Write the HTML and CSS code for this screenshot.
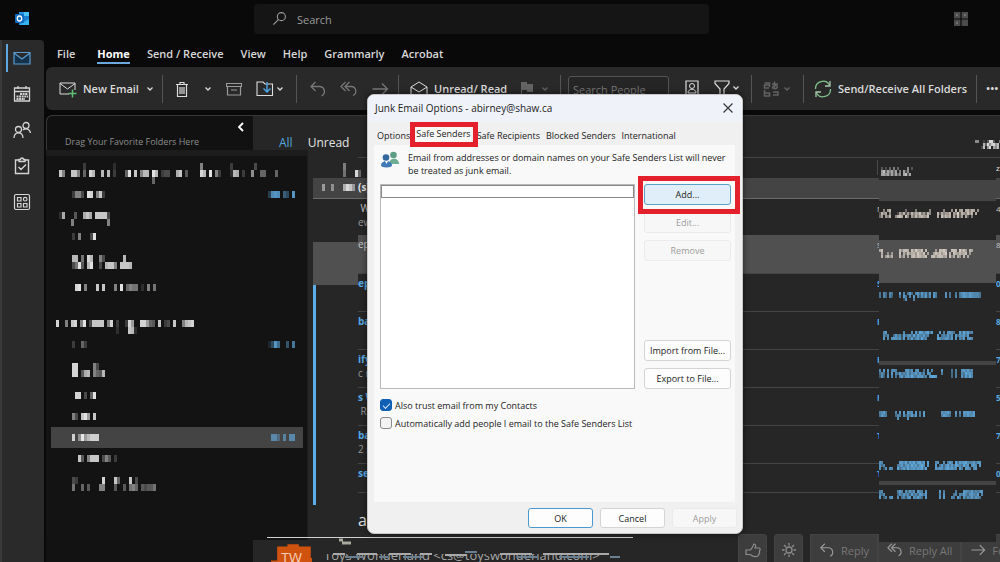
FILE: index.html
```html
<!DOCTYPE html>
<html lang="en">
<head>
<meta charset="utf-8">
<title>Junk Email Options</title>
<link rel="stylesheet" href="styles.css">
</head>
<body>
<svg class="defs" width="0" height="0" aria-hidden="true">
  <symbol id="chev" viewBox="0 0 8 8"><path d="M1.5 2.5 4 5l2.5-2.5" fill="none" stroke="currentColor" stroke-width="1.3"/></symbol>
  <symbol id="undo" viewBox="0 0 18 18"><path d="M6.500 2 2 6.500 6.500 11M2 6.500h9a5 5 0 0 1 1.500 9.500" fill="none" stroke="currentColor" stroke-width="1.300"/></symbol>
  <symbol id="replyall" viewBox="0 0 18 18"><path d="M5.500 2 1 6.500 5.500 11M9.500 2 5 6.500 9.500 11M5 6.500h6.500a4.700 4.700 0 0 1 1.500 9" fill="none" stroke="currentColor" stroke-width="1.300"/></symbol>
  <symbol id="arrow" viewBox="0 0 18 18"><path d="M1.500 9h15M11 3.500 16.500 9 11 14.500" fill="none" stroke="currentColor" stroke-width="1.300"/></symbol>
</svg>
<header class="topbar">
  <svg class="logo" viewBox="0 0 16 16" aria-label="Outlook"><path d="M5 1h10v13H5z" fill="#1c7fd0"/><path d="M10 1h5v4h-5z" fill="#4cc3f5"/><path d="M5 1h5v4H5z" fill="#2497e0"/><path d="m5 14 10-6v6z" fill="#37b3ee"/><rect x="1" y="3" width="9" height="9" rx="1" fill="#0f6cc0"/><ellipse cx="5.500" cy="7.500" rx="2.200" ry="2.500" fill="none" stroke="#fff" stroke-width="1.300"/></svg>
  <label class="search"><svg viewBox="0 0 16 16"><circle cx="10" cy="6" r="4.300" fill="none" stroke="currentColor" stroke-width="1.200"/><path d="m7 9-5.500 5.500" stroke="currentColor" stroke-width="1.300"/></svg><input type="text" placeholder="Search" aria-label="Search"></label>
  <svg class="tiles" viewBox="0 0 14 14"><path d="M0 0h6.400v6.400H0zM7.600 0H14v6.400H7.600zM0 7.600h6.400V14H0zM7.600 7.600H14V14H7.600z" fill="#4c4c4c"/><path d="M2 2h2v2H2zM10 2h2v2h-2zM2 10h2v2H2z" fill="#717171"/></svg>
</header>
<div class="app">
  <nav class="rail">
    <button class="rail-btn active" aria-label="Mail"><svg viewBox="0 0 18 18"><path d="M1 3.500h16v11.500H1zM1 4l8 6 8-6" fill="#16324a" stroke="currentColor" stroke-width="1.200"/></svg></button>
    <button class="rail-btn" aria-label="Calendar"><svg viewBox="0 0 18 18"><path d="M1.500 3h15v13h-15zM1.500 6.500h15M5 1v3M13 1v3" fill="none" stroke="currentColor" stroke-width="1.300"/><path d="M7 9h8M3.500 11.500H15M3.500 14H12" stroke="currentColor" stroke-width="2" stroke-dasharray="2 .6"/></svg></button>
    <button class="rail-btn" aria-label="People"><svg viewBox="0 0 18 18"><g fill="none" stroke="currentColor" stroke-width="1.300"><circle cx="5.500" cy="8.500" r="3"/><path d="M1 17c0-7 9-7 9 0"/><circle cx="13" cy="4.500" r="3"/><path d="M10 9c3-2.500 7-1 7.500 3"/></g></svg></button>
    <button class="rail-btn" aria-label="To Do"><svg viewBox="0 0 18 18"><path d="M6 3H2.500v13.500h13V3H12M6 4.500v-2h1.500a1.500 1.500 0 0 1 3 0H12v2zM5.500 10l2.500 2.500 5-5" fill="none" stroke="currentColor" stroke-width="1.400"/></svg></button>
    <button class="rail-btn" aria-label="More apps"><svg viewBox="0 0 18 18"><g fill="none" stroke="currentColor" stroke-width="1.200"><rect x="1.500" y="1.500" width="15" height="15" rx="1.500"/><path d="M4.500 4.500h3.500v3.500H4.500zM4.500 10.500h3.500v3.500H4.500zM10.500 10.500h3.500v3.500h-3.500z"/><circle cx="12.200" cy="6.200" r="1.800"/></g></svg></button>
  </nav>
  <main class="main">
    <nav class="menu">
      <a href="#">File</a><a href="#" class="current">Home</a><a href="#">Send / Receive</a><a href="#">View</a><a href="#">Help</a><a href="#">Grammarly</a><a href="#">Acrobat</a>
    </nav>
    <div class="ribbon">
      <div class="group g-new"><button><svg class="i18" viewBox="0 0 18 18"><path d="M10 14H1V3h15v7M1 3.500l7.500 5.500L16 3.500" fill="none" stroke="currentColor"/><path d="M13.500 9.500v8M9.500 13.500h8" stroke="#61c078" stroke-width="1.500"/></svg>New Email</button><button aria-label="New items"><svg class="i8"><use href="#chev"/></svg></button></div>
      <div class="group g-del"><button aria-label="Delete"><svg class="i16" viewBox="0 0 16 16"><path d="M2 3.500h12M6 3.500v-2h4v2M3.500 3.500v12h9v-12M6 6v7M8 6v7M10 6v7" fill="none" stroke="currentColor" stroke-width="1.200"/></svg></button><button aria-label="Delete options"><svg class="i8"><use href="#chev"/></svg></button><button aria-label="Archive"><svg class="i16" viewBox="0 0 16 16"><path d="M.500 2.500h15v3H.500zM1.500 5.500v8.500h13V5.500M5 9h6" fill="none" stroke="#9a9a9a" stroke-width="1.200"/></svg></button><button aria-label="Move"><svg class="i18" viewBox="0 0 18 18"><path d="M1 15.500V2h6l2 2h7.500v11.500z" fill="none" stroke="currentColor" stroke-width="1.100"/><path d="M11 2v10M7.500 8.500 11 12l3.500-3.500" fill="none" stroke="#4ba0df" stroke-width="1.500"/></svg><svg class="i8"><use href="#chev"/></svg></button></div>
      <div class="group g-hist dim"><button aria-label="Undo"><svg class="i18"><use href="#undo"/></svg></button><button aria-label="Reply all"><svg class="i18"><use href="#replyall"/></svg></button><button aria-label="Forward"><svg class="i18"><use href="#arrow"/></svg></button></div>
      <div class="group g-read"><button><svg class="i18" viewBox="0 0 18 18"><path d="M1 7l8-5 8 5v9.500H1zM1 7l8 5 8-5" fill="none" stroke="currentColor"/></svg>Unread/ Read</button><button class="dim" aria-label="Flag"><svg class="i16" viewBox="0 0 16 16"><path d="M2 1h6v2h6v8H8V9H3v6.500H2z" fill="currentColor"/></svg><svg class="i8"><use href="#chev"/></svg></button></div>
      <div class="group g-find"><input type="text" placeholder="Search People" aria-label="Search People"><button aria-label="Address book"><svg class="i14" viewBox="0 0 14 16"><path d="M1 1h12v14H1z" fill="none" stroke="currentColor" stroke-width="1.200"/><circle cx="7" cy="6" r="2.500" fill="none" stroke="currentColor"/><path d="M3 13c0-5 8-5 8 0z" fill="none" stroke="currentColor"/></svg></button><button aria-label="Filter"><svg class="i16" viewBox="0 0 16 16"><path d="M1 1h14v2.500L10 9v7H6V9L1 3.500z" fill="none" stroke="currentColor" stroke-width="1.200"/></svg><svg class="i8"><use href="#chev"/></svg></button></div>
      <div class="group g-lang faint"><button aria-label="Translate"><svg class="i18" viewBox="0 0 18 18"><path d="M1.500 3h5v4M6 5H1.500v3H6M1.500 10v6h5v-3h-5M9 4h6M11.500 1.500v7c3 1 4-3 1-3s-4 3-2 3M10 12h5v3h-5" fill="none" stroke="currentColor" stroke-width="1.500"/></svg><svg class="i8"><use href="#chev"/></svg></button></div>
      <div class="group g-sync"><button><svg class="i18" viewBox="0 0 18 18"><path d="M1.500 9A7.500 7.500 0 0 1 15.500 5M16.500 9a7.500 7.500 0 0 1-14 4" fill="none" stroke="#7fc08c" stroke-width="1.300"/><path d="M16 1v5h-5M2 17v-5h5" fill="none" stroke="#a9c9ae" stroke-width="1.300"/></svg>Send/Receive All Folders</button></div>
      <div class="group g-more"><button aria-label="More">•••</button></div>
    </div>
    <section class="content">
      <div class="panes-head">
        <div class="favorites"><span>Drag Your Favorite Folders Here</span><button aria-label="Collapse"><svg viewBox="0 0 8 10"><path d="M6 1 2 5l4 4" fill="none" stroke="#fff" stroke-width="1.800"/></svg></button></div>
        <div class="filters"><button class="on">All</button><button>Unread</button></div>
        <svg class="mosaic sort" data-size="2x3" data-cells="0:88..2.4EE4 12:7.2|1:. 4:B5E8DE9C 14:DAB|3:3C.9E.A8C 14:EDDB"></svg>
      </div>
      <div class="panes">
        <div class="tree">
          <div class="row acc"><svg class="mosaic" data-cells="9:3 19:2 48:8 58:3 66:4|1:D8 5:DD8 9:6 11:EC 15:C 17:C 19:3 23:6F 26:D 28:8CC 32:FC 35:344 40:BD 43:5 48:EC 51:F 53:83 58:2CB 62:3 65:9 68:66 73:6|32:6"></svg></div>
          <div class="row"><svg class="mosaic" data-cells="|0:3884 5:FE 8:8D3|"></svg><svg class="mosaic blue" data-cells="|0:4BCB 5:75 8:C|"></svg></div>
          <div class="row acc"><svg class="mosaic" data-cells="|1:2B 6:5 9:BDB 13:DDDD 17:4|5:8 17:8"></svg></div>
          <div class="row"><svg class="mosaic" data-cells="|0:3 2:8 6:4F|"></svg></div>
          <div class="row tall"><svg class="mosaic" data-cells="0:CC.7.EC 9:84 17:C|0:47F5.CF 9:4 11:CDD8 16:DDDC"></svg></div>
          <div class="row"><svg class="mosaic" data-cells="|1:EF 4:8 8:D 10:D 14:8 16:F 18:6877 23:2 25:8 27:7|"></svg></div>
          <div class="row acc second"><svg class="mosaic" data-cells="|0:E 3:8 5:DE 8:8F 11:4DDDD 17:8E 20:3 23:3EA 28:EEA65 34:D 36:34 39:D 42:8C 44:DE|20:2 24:DC2"></svg></div>
          <div class="row"><svg class="mosaic" data-cells="|0:3 3:63|"></svg><svg class="mosaic blue" data-cells="|0:25C8 6:6 8:9|"></svg></div>
          <div class="row tall"><svg class="mosaic" data-cells="0:EE 7:84|0:EE 3:5BC 7:865C"></svg></div>
          <div class="row"><svg class="mosaic" data-cells="|1:EE 4:4 6:6F|"></svg></div>
          <div class="row"><svg class="mosaic" data-cells="|0:84.DFA.D|"></svg></div>
          <div class="row selected"><svg class="mosaic" data-cells="|0:D.7F8BDDD|"></svg><svg class="mosaic blue muted" data-cells="|0:BB6.A.BB|"></svg></div>
          <div class="row"><svg class="mosaic" data-cells="|2:D5 5:8DDD 10:485 14:3|"></svg></div>
          <div class="row tall"><svg class="mosaic" data-cells="0:43 10:E 14:D6 19:D.4|0:7 3:6 5:5 9:88 14:5 17:5 19:786 23:5455 27:7"></svg></div>
        </div>
        <div class="list">
          <div class="columns"><span class="from">F</span><span class="end">z</span></div>
          <div class="day"><span>(s)</span></div>
          <div class="msg read first"><span class="who">&nbsp;W</span><span class="from">N</span><span class="end">4</span><span class="pre">ew</span></div>
          <div class="msg read picked"><span class="who">ept</span><span class="from">S</span><span class="end">8</span></div>
          <div class="msg"><span class="who">ept</span><span class="from">S</span><span class="end">0</span></div>
          <div class="msg"><span class="who">ba</span><span class="from">F</span><span class="end">8</span></div>
          <div class="msg"><span class="who">ify</span><span class="from">F</span><span class="end">7</span><span class="pre">c r</span></div>
          <div class="msg"><span class="who">s W</span><span class="from">F</span><span class="end">5</span><span class="pre">&nbsp;Re</span></div>
          <div class="msg"><span class="who">ba</span><span class="from">T</span><span class="end">7</span><span class="pre">2 r</span></div>
          <div class="msg short"><span class="who">ser</span><span class="from">T</span><span class="end">0</span></div>
          <h2 class="subject">as</h2>
          <div class="mask-left">
            <svg class="mosaic" data-size="3x7" data-cells="10:7|10:6 14:E5"></svg>
            <div class="band"><svg class="mosaic" data-size="3x7" data-cells="3:8 6:7 10:AEC8"></svg></div>
            <div class="block"></div>
            <div class="unread-bar"></div>
          </div>
          <div class="mask-right">
            <div class="m1"><svg class="mosaic" data-size="2x3" data-cells="1:4.3.5.7.5 14:8 16:4|1:9C5A7A5A.7.A38|1:AA8A5A5A58.AC4A"></svg></div>
            <div class="m2"></div>
            <div class="m3"><svg class="mosaic warm" data-size="2x3" data-cells="2:8.AC 13:6 18:7 25:8 32:8 36:9.C 40:AB.BC8CB 49:9|0:4C8B.9 9:3A7C4A5C8BAD7A5C8 29:C4B8A9C.A8E5CA8D9C.B|0:6A.A7C 8:8CDB.D8.A7C8BCA9D 29:B.D9CAC.B4D5A.B4.7"></svg></div>
            <div class="m4"><svg class="mosaic warm" data-size="2x3" data-cells="0:9C 10:B7BCA.C8DA9C.B 28:8.CBDA 36:CCB.D9C8.B9|1:A 4:7 6:8 10:C.A5C8AB7DA8C.9 27:9CAC8BD 35:B.CA8B9AC.8|1:B 3:8B6A 10:B4A.9.BC8CB9AC 26:BC7BCB8A 35:C4A.A7.B.A"></svg></div>
            <div class="m5"><svg class="mosaic blue" data-size="2x3" data-cells="0:8.A7.A8 10:C.A.8 15:C7.AC7C8B5C.B9 33:B.8 38:8.9BCBACBAAA8|0:8.A7.A6 10:8.C8. 15:A.C.A6A8C5A.C8 33:B.8 38:A.8ACBACBAAA8|12:3B 17:9"></svg></div>
            <div class="m6"><svg class="mosaic blue" data-size="2x3" data-cells="2:AC 12:A 16:B.C6DC9BD8C 30:C.9 34:BCA8 40:C8DAC9A|2:A7A 7:7C8A4C8AB7D8CA9C8A 29:C.8A7C8B.C7BAC8C|2:C.A 6:BCBAB5C.A8C7AC8D9A 29:DB9ACB8C 38:C.A8C.BCA"></svg></div>
            <div class="bar"></div>
            <div class="m7"><svg class="mosaic blue" data-size="2x3" data-cells="0:A.C.B.AB9 13:BC8B.AC 22:8.C 26:A 31:C 36:8.9 41:BCAC9A|0:7A8.A.C.A7C8A9C8BAC9C7A.CA 31:9 36:7.9 41:A8DBCA|0:5B6.C.A.8.AC7BCADA8CBC8A.CDDC 36:7.9 41:B7C9DA"></svg></div>
            <div class="m8"><svg class="mosaic blue" data-size="2x3" data-cells="0:9AC8 8:A.C 12:C.CAB.C.9.C 31:BABCA 38:C 40:A.CBCBAC|0:8CA9 8:7A9.B6A8C8C.9.C 31:9CBA8 38:A 40:8.BACABC|9:B 14:B"></svg></div>
            <div class="m9"><svg class="mosaic blue" data-size="2x3" data-cells="0:BA 10:CCAD8CBD9CDAC.D 28:AB 32:B 34:9CA 38:D8C 41:BCDA9AC8BC|0:B7A 9:9AC8BCADBC9CDB.C 28:C.8C7BD9C8DBA8DAC.BCA.C|0:B.4B.BA 9:D8AC9DABCACBD8D 28:CACB8CDBCAB.C8.CBA.AC"></svg></div>
            <div class="bar"></div>
            <div class="m10"><svg class="mosaic blue" data-size="2x3" data-cells="0:9A 9:9CA.B7C8B.CA9.C 30:C 32:9 38:9 42:CBA9C8A8BC|0:A7A 9:7A8B9A6C8A7CB8C 30:A 32:B 37:8A.A9CA7BCA9C.A|0:C.5A.AC 9:A.8A5BC.B9CA7.C 30:B 32:C 36:A8.C8.B7A9C8BA8"></svg></div>
          </div>
        </div>
      </div>
      <footer class="reading">
        <div class="avatar">TW</div>
        <div class="sender">Toys Wonderland &lt;cs@toyswonderland.com&gt;</div>
        <svg class="strike" viewBox="0 0 370 26"><path d="M0 .5h366" stroke="#d0d0d0"/><path d="M72 3h4M75 6h9" stroke="#a9a9a0" stroke-width="3"/><path d="M66 17h12M90 17h20M122 17h22M153 17h12M178 18h22M233 17h32M276 17h66" stroke="#a9a9a9" stroke-width="2"/><path d="M78 20h18M112 20h9M136 20h20M198 15h12M250 20h20M292 20h30M343 20h10" stroke="#6a7f92" stroke-width="2"/></svg>
        <div class="actions">
          <button aria-label="Like"><svg class="i16" viewBox="0 0 16 16"><path d="M1 8h4c3-2 3-5 4-6 2 0 2 2 1 4h4c1.500 0 1.500 2 .5 2.500C15 11 13.500 14 12 14.500c-3 .5-5-.5-7-2H1z" fill="none" stroke="currentColor" stroke-width="1.200"/></svg></button>
          <button aria-label="Brightness"><svg class="i16" viewBox="0 0 16 16"><circle cx="8" cy="8" r="3" fill="none" stroke="currentColor" stroke-width="1.300"/><path d="M8 1v2.500M8 12.500V15M1 8h2.500M12.500 8H15M3 3l2 2M11 11l2 2M3 13l2-2M11 5l2-2" stroke="currentColor" stroke-width="1.300"/></svg></button>
          <div class="joined">
            <button><svg class="i16"><use href="#undo"/></svg>Reply</button><button><svg class="i16"><use href="#replyall"/></svg>Reply All</button><button><svg class="i16"><use href="#arrow"/></svg>Forward</button>
          </div>
        </div>
      </footer>
    </section>
  </main>
</div>
<section class="dialog" role="dialog" aria-labelledby="dlg-title">
  <header class="dlg-head"><h1 id="dlg-title">Junk Email Options - abirney@shaw.ca</h1><button aria-label="Close"><svg viewBox="0 0 10 10"><path d="m.5.5 9 9M9.500.5l-9 9" stroke="#333" stroke-width="1.100"/></svg></button></header>
  <div class="tabs" role="tablist">
    <button role="tab">Options</button><button role="tab" class="marked" aria-selected="true">Safe Senders</button><button role="tab">Safe Recipients</button><button role="tab">Blocked Senders</button><button role="tab">International</button>
  </div>
  <div class="page">
    <div class="intro">
      <svg viewBox="0 0 20 18"><circle cx="13.500" cy="4" r="3.300" fill="#5f9e86"/><path d="M9 13c0-7 10-7 10 0z" fill="#6fae93"/><circle cx="6" cy="6.500" r="3.300" fill="#35689f"/><path d="M1 14.500c0-6 11-6 11 0 0 2.500-11 2.500-11 0z" fill="#3f79b6"/><path d="m5 10 1.500 3L8 10z" fill="#fff"/></svg>
      <p>Email from addresses or domain names on your Safe Senders List will never be treated as junk email.</p>
    </div>
    <div class="lists">
      <div class="senders"><input type="text" aria-label="Safe sender"></div>
      <div class="side">
        <button class="btn primary">Add...</button>
        <button class="btn" disabled>Edit...</button>
        <button class="btn" disabled>Remove</button>
        <button class="btn push">Import from File...</button>
        <button class="btn">Export to File...</button>
      </div>
    </div>
    <label class="check"><input type="checkbox" checked>Also trust email from my Contacts</label>
    <label class="check"><input type="checkbox">Automatically add people I email to the Safe Senders List</label>
  </div>
  <footer class="dlg-foot"><button class="btn ok">OK</button><button class="btn">Cancel</button><button class="btn" disabled>Apply</button></footer>
</section>
<script src="mosaic.js"></script>
</body>
</html>
```
FILE: styles.css
```css
* { box-sizing: border-box; }
html, body { height: 100%; margin: 0; overflow: hidden; }
body { display: flex; flex-direction: column; position: relative; background: #090909; color: #e4e4e4; font-family: "Open Sans", "Noto Sans", sans-serif; font-size: 11px; }
button { font: inherit; color: inherit; background: none; border: 0; padding: 0; display: inline-flex; align-items: center; }
input { font: inherit; }
svg { flex: none; display: block; }
.defs { position: absolute; }
.i8 { width: 8px; height: 8px; }
.i14 { width: 14px; height: 16px; }
.i16 { width: 16px; height: 16px; }
.i18 { width: 18px; height: 18px; }

.topbar { height: 40px; flex: none; display: grid; grid-template-columns: 254px 455px 1fr; align-items: center; padding-bottom: 3px; }
.logo { width: 16px; height: 16px; margin-left: 14px; }
.search { display: flex; align-items: center; gap: 10px; height: 30px; padding-left: 18px; background: #151515; border-radius: 4px; color: #9a9a9a; }
.search svg { width: 15px; height: 15px; }
.search input { background: none; border: 0; padding: 2px 0 0; font-size: 11px; color: inherit; }
.search input::placeholder { color: #9a9a9a; }
.tiles { width: 14px; height: 14px; justify-self: end; margin-right: 32px; }

.app { flex: 1; min-height: 0; display: flex; }
.rail { width: 44px; flex: none; background: #2a2a2a; border-left: 2px solid #3a3a3a; border-radius: 0 4px 0 0; display: flex; flex-direction: column; }
.rail-btn { height: 36px; padding-right: 2px; justify-content: center; color: #d4d4d4; }
.rail-btn svg { width: 18px; height: 18px; }
.rail-btn.active { color: #5a9bd0; position: relative; }
.rail-btn.active::before { content: ""; position: absolute; left: 4px; top: 4px; width: 2px; height: 28px; background: #5fa6de; }

.main { flex: 1; min-width: 0; display: flex; flex-direction: column; padding-left: 2px; }
.menu { height: 27px; display: flex; gap: 17px; padding: 4px 0 0 11px; }
.menu a { color: #d8d8d8; text-decoration: none; line-height: 20px; height: 20px; font-weight: 600; font-size: 11px; }
.menu .current { color: #fff; font-weight: 700; border-bottom: 2px solid #6da9dc; margin-left: 5px; }

.ribbon { height: 43px; flex: none; display: flex; align-items: center; background: #292929; border-radius: 6px 0 0 6px; overflow: hidden; }
.group { height: 28px; flex: none; display: flex; align-items: center; justify-content: space-between; border-right: 1px solid #555; color: #dcdcdc; }
.group button { gap: 6px; font-weight: 600; white-space: nowrap; }
.g-new { width: 117px; padding: 0 8px 0 13px; }
.g-del { width: 134px; padding: 0 12px 0 11px; }
.g-del button, .g-find button, .g-lang button { gap: 2px; }
.g-hist { width: 102px; padding: 0 9px 0 12px; }
.g-read { width: 162px; padding: 0 11px 0 11px; }
.g-find { width: 191px; padding: 0 11px 0 7px; }
.g-lang { width: 52px; padding: 0 12px 0 11px; }
.g-sync { width: 173px; padding-left: 10px; }
.g-more { flex: 1; border: 0; padding-left: 9px; min-width: 0; overflow: hidden; }
.dim { color: #777; }
.group .dim, .faint { color: #636363; }
.g-find { align-items: flex-start; padding-top: 5px; overflow: visible; }
.g-find input { width: 101px; height: 28px; margin-top: -4px; padding: 0 4px; background: #252525; border: 1px solid #555; border-radius: 3px; color: #999; }
.g-find input::placeholder { color: #777; }

.content { flex: 1; min-height: 0; margin-top: 5px; display: flex; flex-direction: column; background: #262626; border-top: 1px solid #383838; border-radius: 6px 0 0 0; position: relative; }
.panes-head { height: 34px; flex: none; display: flex; overflow: hidden; }
.favorites { width: 207px; background: #111; display: flex; justify-content: space-between; padding: 19px 8px 0 18px; color: #8c8c8c; font-size: 9px; line-height: 14px; border-left: 1px solid #383838; border-radius: 6px 0 0 0; }
.favorites button { align-self: flex-start; margin-top: -13px; }
.favorites svg { width: 8px; height: 10px; }
.filters { display: flex; gap: 15px; padding: 18px 0 0 26px; align-items: flex-start; }
.filters button { font-size: 12px; line-height: 18px; }
.filters .on { color: #55a5dd; }
.sort { margin: 24px -11px 0 auto; }

.panes { flex: 1; min-height: 0; display: flex; }
.tree { width: 262px; flex: none; background: #131313; border-top: 6px solid #1c1c1c; border-right: 1px solid #1d1d1d; padding-top: 7px; }
.row { height: 21px; display: flex; align-items: center; justify-content: space-between; margin: 0 4px 0 5px; padding: 0 8px 0 21px; }
.row.acc { padding-left: 5px; }
.row.second { margin-top: 15px; }
.row.tall { height: 30px; }
.row.selected { background: #444; }
.mosaic { color: #f0f0f0; }
.mosaic.blue { color: #6cc2ff; }
.mosaic.warm { color: #f0e6da; }
.mosaic.muted { opacity: .8; }

.list { flex: 1; min-width: 0; position: relative; padding-top: 7px; }
.columns, .day, .msg { display: grid; grid-template-columns: 1fr 121px 2px; align-content: start; padding: 2px 0 0 0; line-height: 15px; }
.columns { height: 21px; margin-left: 50px; border-top: 1px solid #454545; font-size: 8px; }
.columns .from { grid-column: 2; border-left: 1px solid #4a4a4a; padding-left: 2px; }
.day { height: 21px; margin-left: 5px; padding-left: 45px; background: #444; border-bottom: 1px solid #6a6a6a; font-size: 10px; font-weight: 700; }
.msg { height: 38px; margin-left: 50px; border-bottom: 1px solid #454545; color: #58a9e2; font-size: 10px; font-weight: 700; }
.msg .from, .msg .end, .columns .end { font-size: 8px; white-space: nowrap; }
.msg .end, .columns .end { margin-left: -2px; }
.msg.read { color: #c8c8c8; font-weight: 400; }
.msg.first { height: 36px; border: 0; }
.msg.picked { background: #505050; height: 39px; }
.msg.short { height: 29px; }
.pre { grid-column: 1; color: #999; font-weight: 400; line-height: 13px; }
.subject { margin: 14px 0 0 50px; font-size: 16px; line-height: 26px; font-weight: 400; }
.mask-left { position: absolute; left: 5px; top: 13px; width: 45px; }
.mask-left .band { height: 21px; display: flex; align-items: center; }
.mask-left .block { height: 43px; margin-top: 44px; background: #505050; }
.mask-left .unread-bar { width: 3px; height: 220px; background: #5aaee9; }
.mask-right { position: absolute; right: 4px; top: 13px; width: 117px; background: #262626; z-index: 1; }
.mask-right > div { display: flex; align-items: center; }
.mask-right svg { overflow: visible; }
.m1 { height: 17px; }
.m2 { height: 21px; background: #444; }
.m3 { height: 39px; padding-bottom: 14px; }
.m4 { height: 43px; padding-bottom: 16px; background: #505050; }
.m5 { height: 26px; }
.m6 { height: 52px; }
.m7 { height: 16px; }
.m8 { height: 68px; }
.m9 { height: 32px; }
.m10 { height: 57px; padding-bottom: 39px; }
.bar { height: 4px; background: #444; }

.reading { height: 22px; flex: none; position: relative; display: flex; border-left: 207px solid #121212; }
.avatar { width: 41px; height: 30px; margin: 3px 12px 0 18px; background: #d0520f; color: #f5d0b8; font-size: 14px; line-height: 30px; text-align: center; clip-path: polygon(15% 12%, 40% 12%, 40% 4%, 68% 4%, 68% 12%, 97% 12%, 97% 50%, 100% 50%, 100% 100%, 0 100%, 0 58%, 15% 58%); }
.sender { font-size: 13px; line-height: 30px; color: #a5a5a5; white-space: nowrap; clip-path: inset(14px 0 0 0); }
.strike { position: absolute; left: 14px; top: -3px; width: 370px; height: 26px; }
.actions { position: absolute; right: 0; top: -6px; display: flex; width: 262px; gap: 7px; color: #8c8c8c; font-size: 11px; overflow: hidden; }
.actions button { height: 32px; background: #3d3d3d; border-radius: 3px; padding: 0 8px; gap: 6px; white-space: nowrap; border: 1px solid #444; }
.actions > button { width: 29px; justify-content: center; flex: none; }
.joined { display: flex; }
.joined button { border-radius: 0; color: #777; }
.joined svg { color: #999; }

.dialog { position: absolute; left: 367px; top: 94px; width: 376px; border-radius: 7px; background: #f0f0f0; color: #222; font-size: 9px; overflow: hidden; box-shadow: 0 0 6px #0008; border: 1px solid #c8c8c8; }
.dlg-head { height: 27px; display: flex; justify-content: space-between; align-items: center; padding: 0 9px 2px 7px; background: #f0f2fa; }
.dlg-head h1 { margin: 0; font-size: 10px; font-weight: 400; color: #222; }
.dlg-head svg { width: 10px; height: 10px; }
.tabs { height: 23px; display: flex; gap: 6px; padding: 3px 0 0 9px; }
.tabs .marked { position: relative; background: #f9f9f9; height: 19px; padding-bottom: 3px; }
.marked::after, .primary::after { content: ""; position: absolute; border: 5px solid #e3202c; z-index: 2; }
.marked::after { inset: -3px -7px -3px -6px; }
.page { margin: 0 7px 0 6px; background: #f9f9f9; height: 357px; padding: 5px 4px 0 6px; }
.intro { display: flex; gap: 8px; }
.intro svg { width: 20px; height: 18px; margin-top: 1px; }
.intro p { margin: 1px 0 0; line-height: 13px; flex: 1; }
.lists { display: flex; gap: 9px; margin-top: 7px; height: 205px; }
.senders { flex: 1; background: #fff; border: 1px solid #b9b9b9; }
.senders input { width: 100%; height: 13px; border: 1px solid #8b8b8b; background: #fff; display: block; padding: 0; }
.side { width: 87px; display: flex; flex-direction: column; gap: 7px; }
.btn { height: 21px; flex: none; justify-content: center; background: #fdfdfd; border: 1px solid #d4d4d4; border-radius: 3px; position: relative; }
.btn:disabled { color: #9c9c9c; background: #f7f7f7; border-color: #ebebeb; }
.push { margin-top: auto; }
.primary { background: #e0eef9; border-color: #5d9fc9; }
.primary::after { inset: -9px -10px -10px -7px; }
.check { display: flex; align-items: center; gap: 3px; height: 18px; }
.lists + .check { margin-top: 7px; }
.check input { appearance: none; width: 12px; height: 12px; margin: 0; border: 1px solid #8a8a8a; border-radius: 3px; background: #f3f3f3; display: grid; place-items: center; }
.check input:checked { background: #0f5fb4; border-color: #0f5fb4; }
.check input:checked::before { content: ""; width: 6px; height: 3px; border: solid #cfe4fa; border-width: 0 0 1px 1px; transform: rotate(-45deg); }
.dlg-foot { display: flex; justify-content: flex-end; gap: 7px; padding: 6px 5px 5px; }
.dlg-foot .btn { width: 65px; height: 20px; }
.dlg-foot .ok { border-color: #4b97d1; }
```
FILE: mosaic.js
```js
// Draws redaction mosaics. Rows are split by "|"; each run is "column:values",
// one hex digit per cell giving its brightness, "." for an empty cell.
document.querySelectorAll('.mosaic').forEach(function (svg) {
  var size = (svg.dataset.size || '3x7').split('x').map(Number);
  var rows = svg.dataset.cells.split('|');
  var widest = 0;
  rows.forEach(function (row, y) {
    row.split(' ').forEach(function (run) {
      if (!run) return;
      var parts = run.split(':');
      var start = Number(parts[0]);
      parts[1].split('').forEach(function (v, i) {
        widest = Math.max(widest, start + i + 1);
        if (v === '.') return;
        var r = document.createElementNS('http://www.w3.org/2000/svg', 'rect');
        r.setAttribute('x', (start + i) * size[0]);
        r.setAttribute('y', y * size[1]);
        r.setAttribute('width', size[0]);
        r.setAttribute('height', size[1]);
        r.setAttribute('fill', 'currentColor');
        r.setAttribute('fill-opacity', parseInt(v, 16) / 16);
        svg.appendChild(r);
      });
    });
  });
  svg.setAttribute('width', widest * size[0]);
  svg.setAttribute('height', rows.length * size[1]);
});
```
